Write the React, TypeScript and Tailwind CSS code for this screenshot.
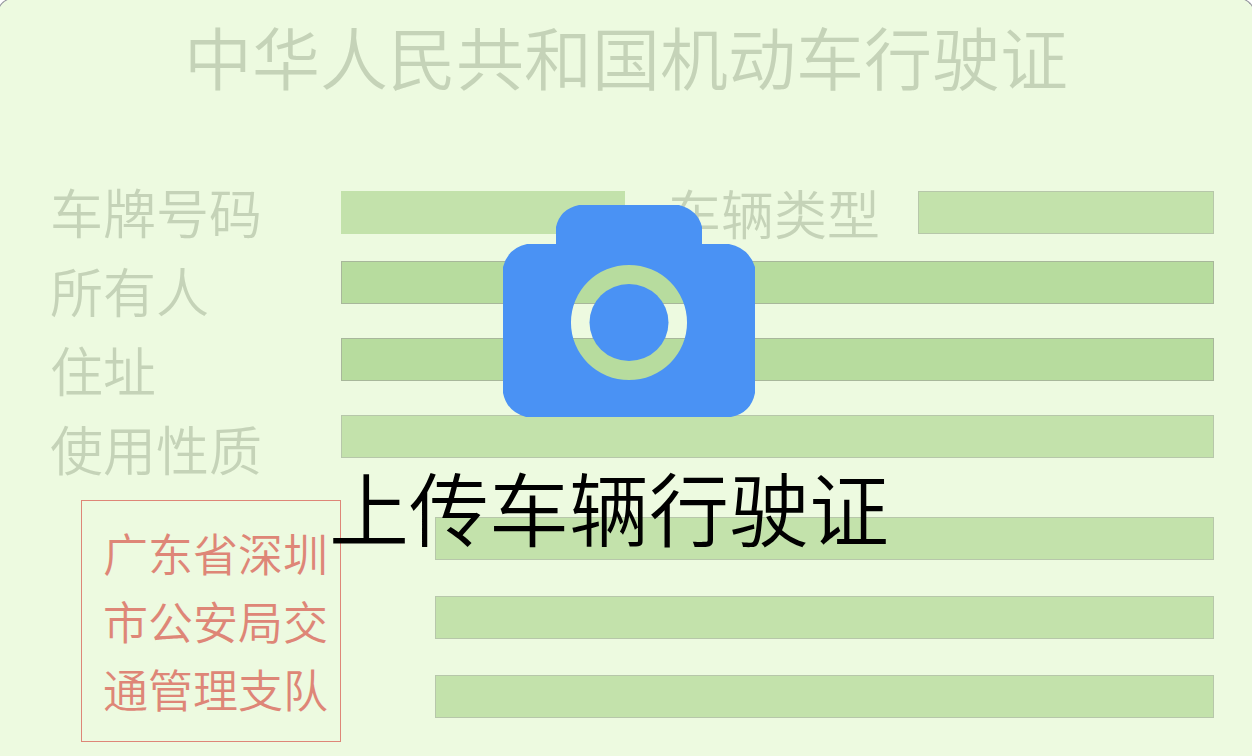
import React from "react";

const label = "text-[53px] whitespace-nowrap text-[#c5d3b8]";

const tones = {
  plain: "bg-[#c3e2ab]",
  light: "border border-[#b7c7aa] bg-[#c3e2ab]",
  dark: "border border-[#a8b79b] bg-[#b7dc9e]",
};

function Bar({ tone, className = "" }: { tone: keyof typeof tones; className?: string }) {
  return <div className={`h-[43px] ${tones[tone]} ${className}`} />;
}

function Camera() {
  return (
    <svg width="252" height="212" viewBox="0 0 252 212" fill="#4a92f4" aria-hidden="true">
      <path
        fillRule="evenodd"
        d="M53 39V22Q57 4 76 0H176Q195 5 199 22V39H226Q246 43 252 62V188Q248 208 228 212H23Q4 207 0 188V62Q5 43 24 39ZM126 60a58 57.500 0 1 0 0 115a58 57.500 0 1 0 0-115Z"
      />
      <ellipse cx="126" cy="117.500" rx="39.500" ry="38.500" />
    </svg>
  );
}

export default function App() {
  return (
    <main
      lang="zh-CN"
      className="relative min-h-screen overflow-hidden bg-white font-[350]"
      style={{ fontFamily: '"Noto Sans CJK SC", sans-serif' }}
    >
      <section className="-mx-1 -mt-[3px] min-h-[759px] rounded-t-[20px] border border-b-0 border-[#8f8f99] bg-[#edfae0] pt-[13px] pr-[41px] pl-[53px]">
        <h1 className="pr-3 text-center text-[68px] leading-[90px] whitespace-nowrap text-[#c5d3b8]">
          中华人民共和国机动车行驶证
        </h1>

        <div className="flex pt-[71px]">
          <div className="w-[291px] shrink-0">
            <ul className={`${label} leading-[79px]`}>
              <li>车牌号码</li>
              <li>所有人</li>
              <li>住址</li>
              <li>使用性质</li>
            </ul>
            <p className="mt-3 ml-[31px] border border-[#de8677] py-[18px] pl-[21px] text-[45px] leading-[68px] whitespace-nowrap text-[#de8677]">
              广东省深圳
              <br />
              市公安局交
              <br />
              通管理支队
            </p>
          </div>

          <div className="min-w-0 flex-1 pt-[19px]">
            <div className="flex items-center">
              <Bar tone="plain" className="flex-[285]" />
              <span className={`${label} mr-[38px] ml-[43px] leading-[43px]`}>车辆类型</span>
              <Bar tone="light" className="flex-[295]" />
            </div>
            <div className="mt-[27px] flex flex-col gap-[34px]">
              <Bar tone="dark" />
              <Bar tone="dark" />
              <Bar tone="light" />
            </div>
            <div className="mt-[59px] ml-[94px] flex flex-col gap-[36px]">
              <Bar tone="light" />
              <Bar tone="light" />
              <Bar tone="light" />
            </div>
          </div>
        </div>
      </section>

      <button
        type="button"
        className="absolute inset-0 flex cursor-pointer flex-col items-center gap-12 pt-[205px] pl-1.5 text-black"
      >
        <Camera />
        <span className="pr-10 text-[80px] leading-[80px] whitespace-nowrap">上传车辆行驶证</span>
      </button>
    </main>
  );
}
